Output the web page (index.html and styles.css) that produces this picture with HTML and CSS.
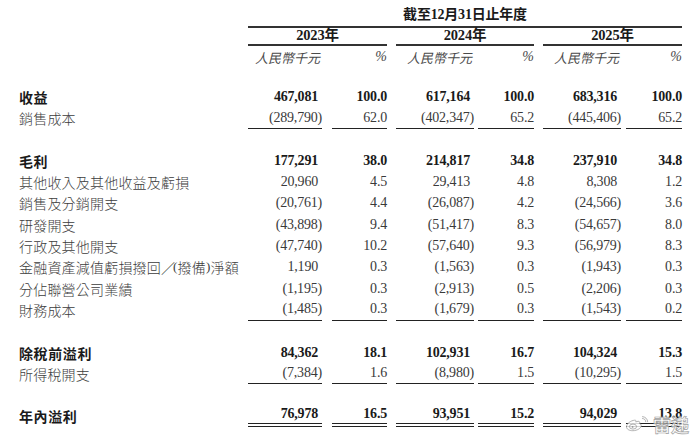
FILE: index.html
```html
<!DOCTYPE html>
<html lang="zh-Hant">
<head>
<meta charset="utf-8">
<title>綜合損益表</title>
<link rel="stylesheet" href="styles.css">
</head>
<body>
<div class="sheet">
  <div class="row head-title">
    <div class="title">截至12月31日止年度</div>
  </div>
  <div class="row head-year">
    <div class="year g1">2023年</div>
    <div class="year g2">2024年</div>
    <div class="year g3">2025年</div>
  </div>
  <div class="row head-unit">
    <div class="unit c1">人民幣千元</div>
    <div class="unit pct p1">%</div>
    <div class="unit c2">人民幣千元</div>
    <div class="unit pct p2">%</div>
    <div class="unit c3">人民幣千元</div>
    <div class="unit pct p3">%</div>
  </div>

  <div class="row bold">
    <div class="label">收益</div>
    <div class="num c1">467,081</div><div class="num pct p1">100.0</div>
    <div class="num c2">617,164</div><div class="num pct p2">100.0</div>
    <div class="num c3">683,316</div><div class="num pct p3">100.0</div>
  </div>
  <div class="row line">
    <div class="label">銷售成本</div>
    <div class="num neg c1">(289,790)</div><div class="num pct p1">62.0</div>
    <div class="num neg c2">(402,347)</div><div class="num pct p2">65.2</div>
    <div class="num neg c3">(445,406)</div><div class="num pct p3">65.2</div>
  </div>
  <div class="row blank"></div>

  <div class="row bold">
    <div class="label">毛利</div>
    <div class="num c1">177,291</div><div class="num pct p1">38.0</div>
    <div class="num c2">214,817</div><div class="num pct p2">34.8</div>
    <div class="num c3">237,910</div><div class="num pct p3">34.8</div>
  </div>
  <div class="row">
    <div class="label">其他收入及其他收益及虧損</div>
    <div class="num c1">20,960</div><div class="num pct p1">4.5</div>
    <div class="num c2">29,413</div><div class="num pct p2">4.8</div>
    <div class="num c3">8,308</div><div class="num pct p3">1.2</div>
  </div>
  <div class="row">
    <div class="label">銷售及分銷開支</div>
    <div class="num neg c1">(20,761)</div><div class="num pct p1">4.4</div>
    <div class="num neg c2">(26,087)</div><div class="num pct p2">4.2</div>
    <div class="num neg c3">(24,566)</div><div class="num pct p3">3.6</div>
  </div>
  <div class="row">
    <div class="label">研發開支</div>
    <div class="num neg c1">(43,898)</div><div class="num pct p1">9.4</div>
    <div class="num neg c2">(51,417)</div><div class="num pct p2">8.3</div>
    <div class="num neg c3">(54,657)</div><div class="num pct p3">8.0</div>
  </div>
  <div class="row">
    <div class="label">行政及其他開支</div>
    <div class="num neg c1">(47,740)</div><div class="num pct p1">10.2</div>
    <div class="num neg c2">(57,640)</div><div class="num pct p2">9.3</div>
    <div class="num neg c3">(56,979)</div><div class="num pct p3">8.3</div>
  </div>
  <div class="row">
    <div class="label">金融資產減值虧損撥回<span class="slash">／</span><span class="paren">(</span>撥備<span class="paren">)</span>淨額</div>
    <div class="num c1">1,190</div><div class="num pct p1">0.3</div>
    <div class="num neg c2">(1,563)</div><div class="num pct p2">0.3</div>
    <div class="num neg c3">(1,943)</div><div class="num pct p3">0.3</div>
  </div>
  <div class="row">
    <div class="label">分佔聯營公司業績</div>
    <div class="num neg c1">(1,195)</div><div class="num pct p1">0.3</div>
    <div class="num neg c2">(2,913)</div><div class="num pct p2">0.5</div>
    <div class="num neg c3">(2,206)</div><div class="num pct p3">0.3</div>
  </div>
  <div class="row line">
    <div class="label">財務成本</div>
    <div class="num neg c1">(1,485)</div><div class="num pct p1">0.3</div>
    <div class="num neg c2">(1,679)</div><div class="num pct p2">0.3</div>
    <div class="num neg c3">(1,543)</div><div class="num pct p3">0.2</div>
  </div>
  <div class="row blank"></div>

  <div class="row bold">
    <div class="label">除稅前溢利</div>
    <div class="num c1">84,362</div><div class="num pct p1">18.1</div>
    <div class="num c2">102,931</div><div class="num pct p2">16.7</div>
    <div class="num c3">104,324</div><div class="num pct p3">15.3</div>
  </div>
  <div class="row line">
    <div class="label">所得稅開支</div>
    <div class="num neg c1">(7,384)</div><div class="num pct p1">1.6</div>
    <div class="num neg c2">(8,980)</div><div class="num pct p2">1.5</div>
    <div class="num neg c3">(10,295)</div><div class="num pct p3">1.5</div>
  </div>
  <div class="row blank"></div>

  <div class="row bold dline">
    <div class="label">年內溢利</div>
    <div class="num c1">76,978</div><div class="num pct p1">16.5</div>
    <div class="num c2">93,951</div><div class="num pct p2">15.2</div>
    <div class="num c3">94,029</div><div class="num pct p3">13.8</div>
  </div>

  <div class="watermark">
    <svg class="wb" viewBox="0 0 26 16" width="26" height="16" aria-hidden="true">
      <path d="M10.5 4.2c-3.6.4-7.6 3.2-8 6.2-.3 2.6 2.6 4.4 6.4 4.3 4.3-.1 8.2-2.4 8.3-5.1.1-1.2-.8-1.7-1.8-2 .7-1.4.2-2.4-1.3-2.3-.8 0-1.6.4-2.3.7.4-1.4-.1-2.1-1.3-1.8z" fill="rgba(255,255,255,0.85)" stroke="#9a9a9a" stroke-width="0.8"/>
      <ellipse cx="9" cy="10.6" rx="3.6" ry="2.5" fill="none" stroke="#9a9a9a" stroke-width="0.8"/>
      <circle cx="8.6" cy="10.9" r="0.9" fill="#9a9a9a"/>
      <path d="M18.5 2.5c1.8.1 3.2 1.4 3.3 3.2M18.5 0.6c2.9.2 5 2.3 5.2 5.1" fill="none" stroke="#9a9a9a" stroke-width="0.8" stroke-linecap="round"/>
    </svg>
    <span class="wtext">雷递</span>
  </div>
</div>
</body>
</html>
```

FILE: styles.css
```css
html, body {
  margin: 0;
  padding: 0;
  background: #ffffff;
}

body {
  width: 700px;
  height: 442px;
  overflow: hidden;
  font-family: "Liberation Serif", "Noto Sans CJK TC", serif;
  color: #3a3a3a;
}

.sheet {
  position: relative;
  padding-top: 3px;
}

.row {
  display: grid;
  grid-template-columns: 229px 74px 10px 55px 9px 78px 4px 56px 9px 78px 5px 56px;
  padding-left: 19px;
  height: 21.3px;
  align-items: stretch;
  box-sizing: border-box;
}

.row > div {
  box-sizing: border-box;
  display: flex;
  align-items: center;
  white-space: nowrap;
}

.head-title {
  height: 19px;
}

.title {
  grid-column: 2 / 13;
  justify-content: center;
  font-family: "Liberation Serif", "Noto Sans CJK TC", serif;
  font-weight: 700;
  font-size: 14px;
  color: #1a1a1a;
  border-bottom: 2px solid #333;
  padding-bottom: 3px;
}

.title, .year {
  letter-spacing: -0.2px;
}

.head-year {
  height: 21px;
}

.year {
  justify-content: center;
  font-weight: 700;
  font-size: 14.5px;
  color: #1a1a1a;
  border-bottom: 2px solid #333;
  padding-top: 1px;
}

.g1 { grid-column: 2 / 5; }
.g2 { grid-column: 6 / 9; }
.g3 { grid-column: 10 / 13; }

.head-unit {
  height: 24px;
  margin-bottom: 19.3px;
}

.unit {
  justify-content: flex-end;
  font-family: "Noto Sans CJK TC", sans-serif;
  font-style: italic;
  font-size: 13px;
  font-weight: 400;
  color: #4a4a4a;
  padding-top: 4px;
  padding-right: 2px;
}

.unit.pct {
  font-family: "Liberation Serif", serif;
  font-size: 14px;
  padding-right: 0;
}

.c1 { grid-column: 2; }
.p1 { grid-column: 4; }
.c2 { grid-column: 6; }
.p2 { grid-column: 8; }
.c3 { grid-column: 10; }
.p3 { grid-column: 12; }

.label {
  grid-column: 1;
  font-family: "Noto Sans CJK TC", sans-serif;
  font-size: 14px;
  font-weight: 300;
  letter-spacing: 0.2px;
  color: #3c3c3c;
}

.slash {
  letter-spacing: -2px;
}

.paren {
  font-family: "Liberation Serif", serif;
  font-size: 13px;
}

.num {
  justify-content: flex-end;
  font-family: "Liberation Serif", serif;
  font-size: 14px;
  letter-spacing: -0.2px;
  padding-right: 4px;
  color: #3a3a3a;
}

.num.neg {
  padding-right: 0;
}

.num.pct {
  padding-right: 0;
}

.bold .label {
  font-weight: 700;
  color: #1a1a1a;
  letter-spacing: 0.6px;
}

.bold .num {
  font-weight: 700;
  color: #1a1a1a;
}

.line .num {
  border-bottom: 1px solid #222;
}

.dline .num {
  border-bottom: 4px double #222;
}

.watermark {
  position: absolute;
  left: 624px;
  top: 414px;
  display: flex;
  align-items: center;
  opacity: 0.95;
}

.wb {
  display: block;
}

.wtext {
  font-family: "Noto Sans CJK SC", sans-serif;
  font-size: 18px;
  font-weight: 700;
  line-height: 20px;
  color: rgba(255, 255, 255, 0.75);
  -webkit-text-stroke: 0.7px #9a9a9a;
  margin-left: 3px;
}
```
